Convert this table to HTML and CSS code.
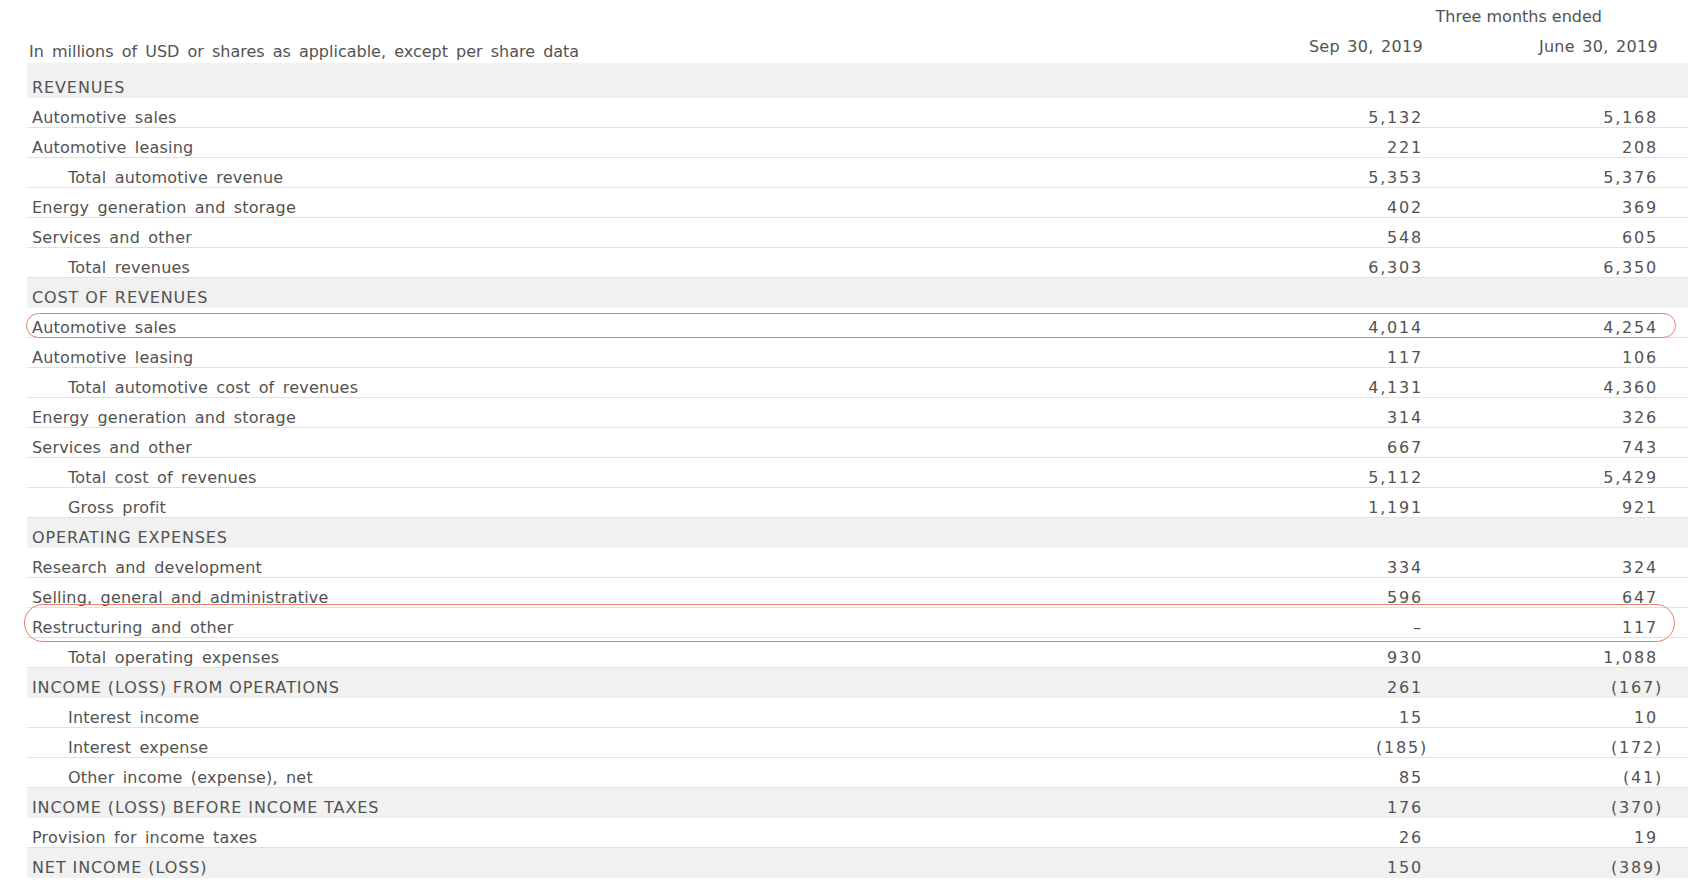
FILE: index.html
```html
<!DOCTYPE html>
<html>
  <head>
    <meta charset="utf-8">
    <title>Statement of operations</title>
    <link rel="stylesheet" href="styles.css">
  </head>
  <body>
    <div class="page">
      <div class="period-row">Three months ended</div>
      <div class="cols head">
        <div class="note">In millions of USD or shares as applicable, except per share data</div>
        <div class="date">Sep 30, 2019</div>
        <div class="date">June 30, 2019</div>
      </div>

      <div class="statement">
        <div class="cols row section"><div class="label">REVENUES</div><div class="num"></div><div class="num"></div></div>
        <div class="cols row"><div class="label">Automotive sales</div><div class="num">5,132</div><div class="num">5,168</div></div>
        <div class="cols row"><div class="label">Automotive leasing</div><div class="num">221</div><div class="num">208</div></div>
        <div class="cols row indent"><div class="label">Total automotive revenue</div><div class="num">5,353</div><div class="num">5,376</div></div>
        <div class="cols row"><div class="label">Energy generation and storage</div><div class="num">402</div><div class="num">369</div></div>
        <div class="cols row"><div class="label">Services and other</div><div class="num">548</div><div class="num">605</div></div>
        <div class="cols row indent"><div class="label">Total revenues</div><div class="num">6,303</div><div class="num">6,350</div></div>

        <div class="cols row section"><div class="label">COST OF REVENUES</div><div class="num"></div><div class="num"></div></div>
        <div class="cols row"><div class="label">Automotive sales</div><div class="num">4,014</div><div class="num">4,254</div></div>
        <div class="cols row"><div class="label">Automotive leasing</div><div class="num">117</div><div class="num">106</div></div>
        <div class="cols row indent"><div class="label">Total automotive cost of revenues</div><div class="num">4,131</div><div class="num">4,360</div></div>
        <div class="cols row"><div class="label">Energy generation and storage</div><div class="num">314</div><div class="num">326</div></div>
        <div class="cols row"><div class="label">Services and other</div><div class="num">667</div><div class="num">743</div></div>
        <div class="cols row indent"><div class="label">Total cost of revenues</div><div class="num">5,112</div><div class="num">5,429</div></div>
        <div class="cols row indent"><div class="label">Gross profit</div><div class="num">1,191</div><div class="num">921</div></div>

        <div class="cols row section"><div class="label">OPERATING EXPENSES</div><div class="num"></div><div class="num"></div></div>
        <div class="cols row"><div class="label">Research and development</div><div class="num">334</div><div class="num">324</div></div>
        <div class="cols row"><div class="label">Selling, general and administrative</div><div class="num">596</div><div class="num">647</div></div>
        <div class="cols row"><div class="label">Restructuring and other</div><div class="num">&ndash;</div><div class="num">117</div></div>
        <div class="cols row indent"><div class="label">Total operating expenses</div><div class="num">930</div><div class="num">1,088</div></div>

        <div class="cols row section"><div class="label">INCOME (LOSS) FROM OPERATIONS</div><div class="num">261</div><div class="num neg">(167)</div></div>
        <div class="cols row indent"><div class="label">Interest income</div><div class="num">15</div><div class="num">10</div></div>
        <div class="cols row indent"><div class="label">Interest expense</div><div class="num neg">(185)</div><div class="num neg">(172)</div></div>
        <div class="cols row indent"><div class="label">Other income (expense), net</div><div class="num">85</div><div class="num neg">(41)</div></div>
        <div class="cols row section"><div class="label">INCOME (LOSS) BEFORE INCOME TAXES</div><div class="num">176</div><div class="num neg">(370)</div></div>
        <div class="cols row"><div class="label">Provision for income taxes</div><div class="num">26</div><div class="num">19</div></div>
        <div class="cols row section"><div class="label">NET INCOME (LOSS)</div><div class="num">150</div><div class="num neg">(389)</div></div>
        <div class="cols row"><div class="label">Net income attributable to noncontrolling interests and redeemable noncontrolling interests in subsidiaries</div><div class="num">7</div><div class="num">19</div></div>
      </div>

      <!-- hand drawn highlight rings -->
      <div class="mark mark-sales"></div>
      <div class="mark mark-restructuring"></div>
    </div>
  </body>
</html>
```

FILE: styles.css
```css
html,
body {
  margin: 0;
  overflow: hidden;
  background-color: #fff;
}
body {
  font-family: "DejaVu Sans", Verdana, sans-serif;
  font-size: 16px;
  color: #525252;
}
.page {
  position: relative;
  height: 890px;
  padding-left: 27px;
  overflow: hidden;
}
.cols {
  display: grid;
  grid-template-columns: 1fr 235px 235px;
}
.period-row {
  height: 32px;
  box-sizing: border-box;
  padding: 7px 86px 0 0;
  line-height: 19px;
  text-align: right;
}
.head {
  height: 36px;
  box-sizing: border-box;
  border-bottom: 5px solid #f1f1f1;
  line-height: 19px;
}
.note {
  padding: 10px 0 0 2px;
  word-spacing: 3px;
  white-space: nowrap;
}
.date {
  padding: 5px 30px 0 0;
  text-align: right;
  letter-spacing: 0.3px;
  word-spacing: 2px;
}
.row {
  height: 30px;
  box-sizing: border-box;
  padding-top: 10px;
  line-height: 19px;
  border-bottom: 1px solid #e1e1e1;
}
.row.section {
  background-color: #f1f1f1;
  border-bottom: 0;
}
.label {
  padding-left: 5px;
  letter-spacing: 0.2px;
  word-spacing: 3px;
  white-space: nowrap;
}
.section .label {
  letter-spacing: 0.9px;
  word-spacing: 0;
}
.indent .label {
  padding-left: 41px;
}
.num {
  padding-right: 30px;
  text-align: right;
  letter-spacing: 1.8px;
}
.num.neg {
  padding-right: 25px;
}
.mark {
  position: absolute;
  border: 1.5px solid #e8806b;
  border-radius: 20px;
}
.mark-sales {
  left: 26px;
  top: 313px;
  width: 1648px;
  height: 23px;
  border-radius: 14px;
}
.mark-restructuring {
  left: 24px;
  top: 604px;
  width: 1649px;
  height: 36px;
}
```
